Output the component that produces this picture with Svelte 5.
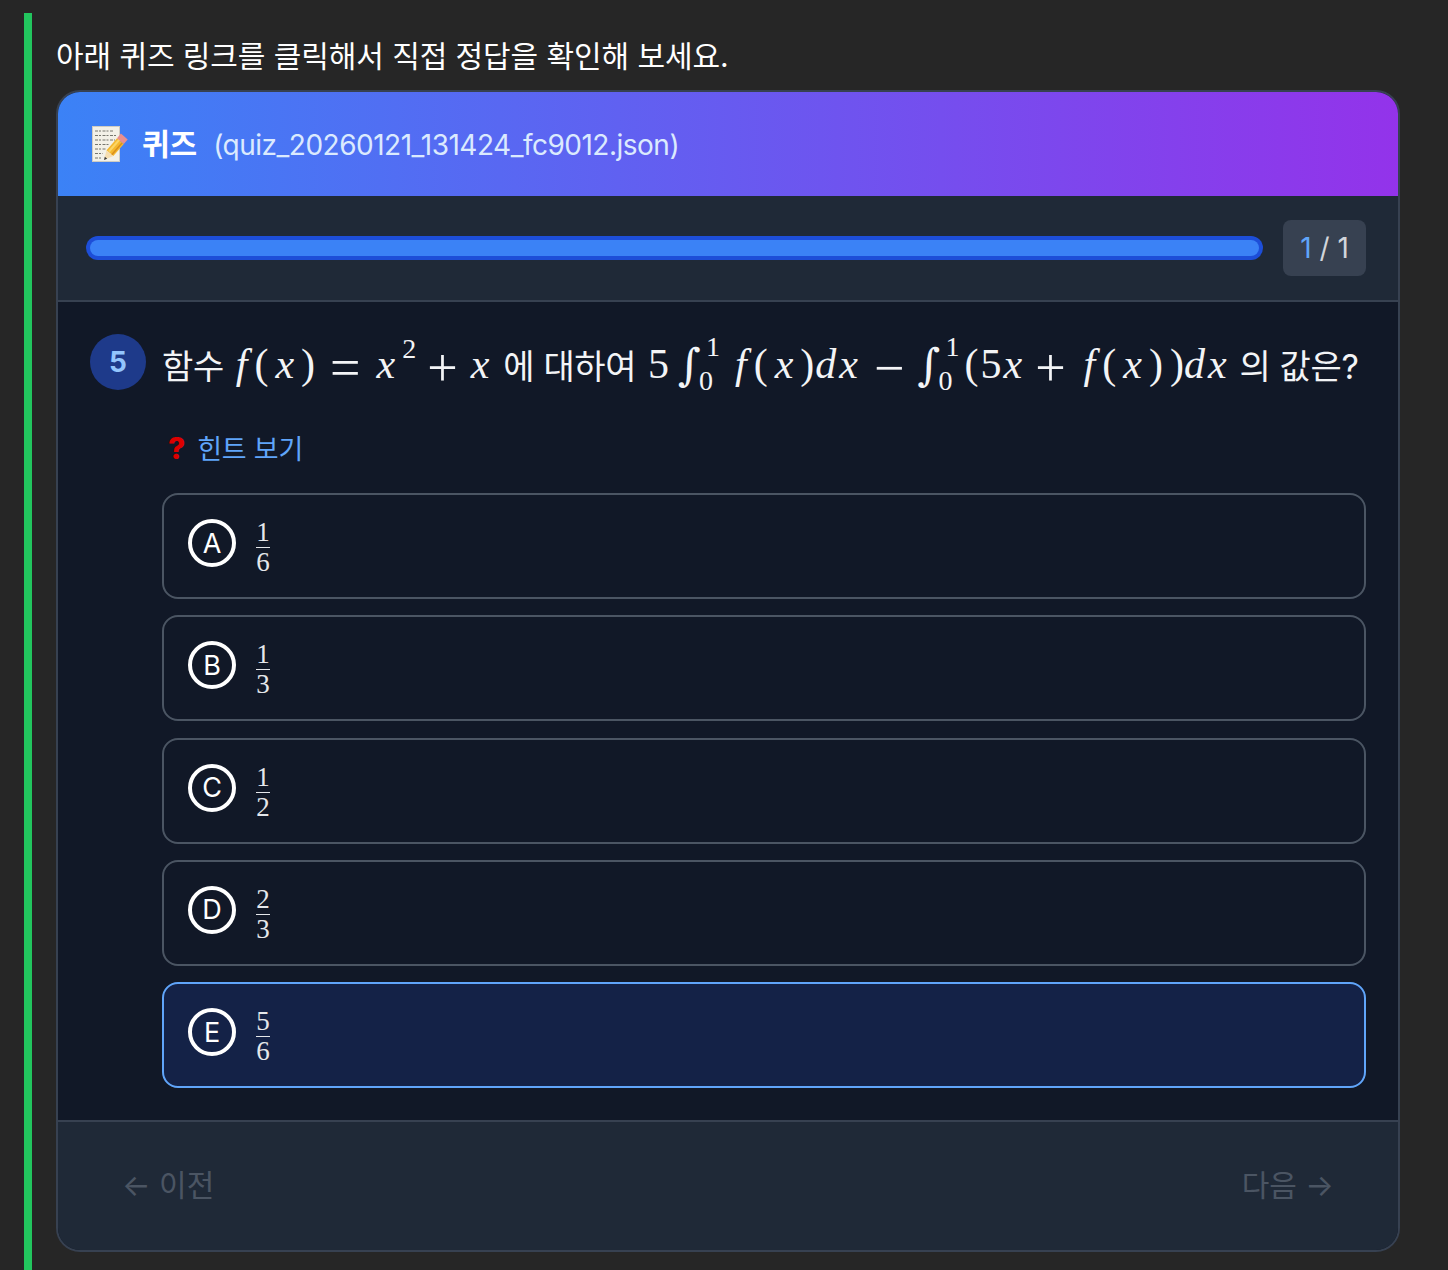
<script lang="ts">
  const options = [
    { key: 'A', num: 1, den: 6, selected: false },
    { key: 'B', num: 1, den: 3, selected: false },
    { key: 'C', num: 1, den: 2, selected: false },
    { key: 'D', num: 2, den: 3, selected: false },
    { key: 'E', num: 5, den: 6, selected: true },
  ];
</script>

<div class="page">
  <div class="message">
    <p class="intro">아래 퀴즈 링크를 클릭해서 직접 정답을 확인해 보세요.</p>

    <section class="quiz">
      <header class="head">
        <svg class="memo" viewBox="0 0 36 36" width="36" height="36" aria-hidden="true">
          <rect x="0.5" y="0.5" width="27" height="35" fill="#f3f1e8" stroke="#cfccc2" />
          <g stroke="#77776f" stroke-width="1" stroke-dasharray="3 1 2 1.5" fill="none">
            <path d="M3 5h19M3 9.5h21M3 14h20M3 18.5h15M3 23h11M3 27.5h8M3 32h6" />
          </g>
          <path d="M14.5 24.3L25 12.2l6.8 5.8L21.3 30.1z" fill="#f5b82e" />
          <path d="M17 25.5L27.5 13.5" stroke="#fbd566" stroke-width="2" />
          <path d="M19.5 29L30 17" stroke="#d98f1c" stroke-width="1.5" />
          <path d="M25 12.2l3.9-4.6 6.8 5.8-3.9 4.6z" fill="#e88f8f" />
          <path d="M14.5 24.3L12 34l9.3-3.9z" fill="#f6deb0" />
          <path d="M12 34l.8-3.2 2.4 2z" fill="#3a3a3a" />
        </svg>
        <strong>퀴즈</strong>
        <span class="file">(quiz_20260121_131424_fc9012.json)</span>
      </header>

      <div class="progress">
        <div class="track"><div class="fill"></div></div>
        <div class="count"><span>1</span> / 1</div>
      </div>

      <div class="body">
        <div class="question">
          <div class="num">5</div>
          <div class="qtext">
            <span>함수</span>
            <span class="math"><i>f</i>(<i>x</i>)<b class="op eq">=</b><i>x</i><sup>2</sup><b class="op plus">+</b><i>x</i></span>
            <span>에 대하여</span>
            <span class="math second">5<span class="int first">∫<span class="lims"><em>1</em><em>0</em></span></span><i>f</i>(<i>x</i>)<i class="dx">dx</i><b class="op minus">−</b><span class="int">∫<span class="lims"><em>1</em><em>0</em></span></span><span class="tight">(5<i>x</i></span><b class="op plus2">+</b><i>f</i>(<i>x</i>))<i class="dx last">dx</i></span>
            <span>의 값은?</span>
          </div>
        </div>

        <div class="hint"><span class="mark">?</span>힌트 보기</div>

        <div class="options">
          {#each options as opt}
            <div class="option" class:selected={opt.selected}>
              <span class="letter">{opt.key}</span>
              <span class="frac"><span class="top">{opt.num}</span><span>{opt.den}</span></span>
            </div>
          {/each}
        </div>
      </div>

      <footer class="foot">
        <span class="nav">← 이전</span>
        <span class="nav">다음 →</span>
      </footer>
    </section>
  </div>
</div>

<style>
  :global(body) {
    background: #262626;
    font-family: Inter, "Noto Sans CJK KR", sans-serif;
    color: #fff;
  }

  .page {
    padding: 13px 48px 0 24px;
    height: 1257px;
    overflow: hidden;
  }

  .message {
    border-left: 8px solid #22c55e;
    padding: 23px 0 0 24px;
    height: 100%;
  }

  .intro {
    margin: 0 0 14px;
    font-size: 30px;
    line-height: 40px;
    letter-spacing: -0.08px;
  }

  .quiz {
    width: 1344px;
    box-sizing: border-box;
    border: 2px solid #374151;
    border-radius: 24px;
    overflow: hidden;
    background: #111827;
  }

  .head {
    height: 104px;
    display: flex;
    align-items: center;
    padding: 0 34px;
    background: linear-gradient(90deg, #3b82f6, #9333ea);
  }

  .memo {
    margin-right: 14px;
  }

  .head strong {
    font-size: 30px;
    font-weight: 700;
    margin-right: 16px;
    padding-bottom: 4px;
  }

  .file {
    font-size: 28px;
    color: #dbeafe;
    letter-spacing: -0.5px;
    padding-top: 2px;
  }

  .progress {
    height: 104px;
    display: flex;
    align-items: center;
    gap: 20px;
    padding: 0 32px 0 28px;
    background: #1f2937;
    border-bottom: 2px solid #374151;
  }

  .track {
    flex: 1;
    height: 24px;
    box-sizing: border-box;
    border-radius: 12px;
    padding: 4px;
    background: #1d4ed8;
  }

  .fill {
    height: 100%;
    border-radius: 8px;
    background: #3b82f6;
  }

  .count {
    width: 83px;
    height: 56px;
    display: flex;
    align-items: center;
    justify-content: center;
    white-space: pre;
    border-radius: 8px;
    background: #374151;
    color: #d1d5db;
    font-size: 28px;
  }

  .count span {
    color: #60a5fa;
  }

  .body {
    padding: 32px;
  }

  .question {
    display: flex;
    gap: 16px;
    align-items: flex-start;
  }

  .num {
    width: 56px;
    height: 56px;
    flex: none;
    display: flex;
    align-items: center;
    justify-content: center;
    border-radius: 50%;
    background: #1e3a8a;
    color: #93c5fd;
    font-size: 28px;
    font-weight: 700;
  }

  .qtext {
    display: flex;
    align-items: center;
    gap: 10px;
    height: 60px;
    white-space: nowrap;
    font-size: 34px;
    letter-spacing: -0.4px;
    color: #f3f4f6;
  }

  .math {
    font-family: "Liberation Serif", serif;
    font-size: 42px;
    letter-spacing: 7px;
    display: inline-flex;
    align-items: center;
    white-space: pre;
    margin: 0 -3px 0 2px;
  }

  .math.second {
    margin-right: 0;
  }

  .math i {
    font-style: italic;
  }

  .math .dx {
    letter-spacing: 3px;
    margin-left: -6px;
  }

  .math .dx.last {
    margin-left: -7px;
  }

  .math .op {
    font-size: 54px;
    line-height: 1;
    font-weight: 400;
    letter-spacing: 0;
    padding-top: 7px;
  }

  .op.eq {
    margin: 0 16px 0 8px;
  }

  .op.plus {
    margin: 0 13px 0 11px;
  }

  .op.minus {
    margin: 0 13px 0 13px;
  }

  .op.plus2 {
    margin: 0 18px 0 11px;
  }

  .math sup {
    font-size: 28px;
    line-height: 1;
    letter-spacing: 0;
    align-self: flex-start;
    margin-top: 1px;
  }

  .tight {
    letter-spacing: 2px;
  }

  .int {
    display: inline-flex;
    align-items: center;
    width: 41px;
    margin-right: 6px;
    font-family: "DejaVu Serif", serif;
    font-size: 44px;
    font-style: italic;
    letter-spacing: 0;
  }

  .int.first {
    margin: 0 16px 0 2px;
  }

  .lims {
    display: inline-flex;
    flex-direction: column;
    font-family: "Liberation Serif", serif;
    font-size: 28px;
    line-height: 34px;
    margin-left: -2px;
  }

  .lims em {
    font-style: normal;
  }

  .lims em:first-child {
    margin-left: 7px;
  }

  .hint {
    margin: 36px 0 25px 72px;
    font-size: 27px;
    line-height: 36px;
    letter-spacing: -0.2px;
    color: #60a5fa;
  }

  .mark {
    color: #dc0000;
    font-size: 30px;
    font-weight: 800;
    margin: 0 12px 0 6px;
  }

  .options {
    display: flex;
    flex-direction: column;
    gap: 16.3px;
    margin-left: 72px;
  }

  .option {
    box-sizing: border-box;
    height: 106px;
    display: flex;
    align-items: flex-start;
    gap: 20px;
    padding: 24px;
    border: 2px solid #4b5563;
    border-radius: 16px;
    background: #111827;
  }

  .option.selected {
    background: #142247;
    border-color: #60a5fa;
  }

  .letter {
    box-sizing: border-box;
    width: 48px;
    height: 48px;
    flex: none;
    display: flex;
    align-items: center;
    justify-content: center;
    border: 4px solid #fff;
    border-radius: 50%;
    font-size: 27px;
    font-weight: 400;
  }

  .frac {
    display: flex;
    flex-direction: column;
    align-items: center;
    width: 14px;
    margin-top: -1px;
    font-family: "Liberation Serif", serif;
    font-size: 27px;
    line-height: 29px;
    color: #e5e7eb;
  }

  .frac .top {
    width: 100%;
    text-align: center;
    border-bottom: 1px solid #e5e7eb;
  }

  .foot {
    height: 128px;
    display: flex;
    align-items: center;
    justify-content: space-between;
    padding: 0 64px;
    border-top: 2px solid #374151;
    background: #1f2937;
  }

  .nav {
    font-size: 30px;
    color: #4b5563;
    padding-bottom: 6px;
  }
</style>
